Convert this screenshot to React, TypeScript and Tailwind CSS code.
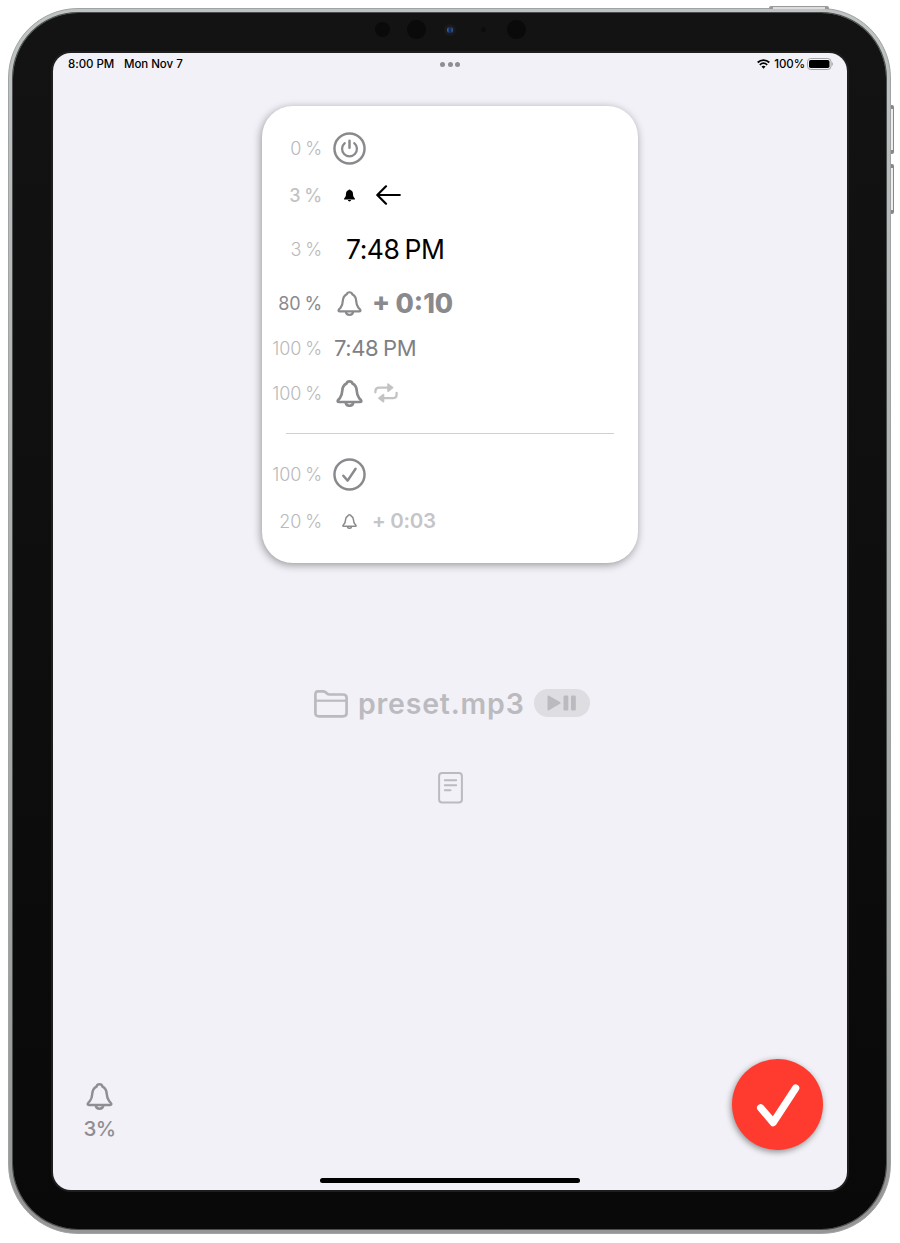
import type { ReactNode } from "react";

function Bell({ size, stroke = 2 }: { size: number; stroke?: number }) {
  return (
    <svg width={size} height={size} viewBox="0 0 28 28" fill="none" stroke="currentColor" strokeWidth={stroke} strokeLinejoin="round" className="block shrink-0">
      <path d="M14 1.4C12.4 1.4 11.3 2.3 10.9 3.7C8.2 5 6.7 7.6 6.5 11.2C6.3 15.2 5.8 16.6 4 18.7C2.5 20.4 1.7 21 1.7 21.9C1.7 22.5 2.1 22.8 2.8 22.8H25.2C25.9 22.8 26.3 22.5 26.3 21.9C26.3 21 25.5 20.4 24 18.7C22.2 16.6 21.7 15.2 21.5 11.2C21.3 7.6 19.8 5 17.1 3.7C16.7 2.3 15.6 1.4 14 1.4Z" />
      <path d="M10 23C10.2 25.4 11.8 26.7 14 26.7S17.8 25.4 18 23" />
    </svg>
  );
}

function BellSolid() {
  return (
    <svg width="13" height="13" viewBox="0 0 12 13" fill="currentColor" className="block">
      <path d="M6 .4C5.4 .4 5 .8 4.8 1.2C3.3 1.7 2.6 3 2.5 4.7C2.4 7 2.1 7.7 1.2 8.7C.7 9.3 .5 9.5 .5 9.9C.5 10.3 .8 10.5 1.2 10.5H10.8C11.2 10.5 11.5 10.3 11.5 9.9C11.5 9.5 11.3 9.3 10.8 8.7C9.9 7.7 9.6 7 9.5 4.7C9.4 3 8.7 1.7 7.2 1.2C7 .8 6.6 .4 6 .4Z" />
      <path d="M4.3 11.1H7.7C7.4 12 6.8 12.4 6 12.4S4.6 12 4.3 11.1Z" />
    </svg>
  );
}

function Power() {
  return (
    <svg width="33" height="33" viewBox="0 0 32 32" fill="none" stroke="currentColor" strokeWidth="2.4" strokeLinecap="round" className="block">
      <circle cx="16" cy="16" r="14.6" />
      <path d="M16 8.4V15.2" />
      <path d="M11.4 10.8A7.2 7.2 0 1 0 20.6 10.8" strokeWidth="2.2" />
    </svg>
  );
}

function CheckCircle() {
  return (
    <svg width="33" height="33" viewBox="0 0 32 32" fill="none" stroke="currentColor" strokeWidth="2.4" strokeLinecap="round" strokeLinejoin="round" className="block">
      <circle cx="16" cy="16" r="14.6" />
      <path d="M10 17.2L14.2 22L21.9 10.4" />
    </svg>
  );
}

function Repeat() {
  return (
    <svg width="24" height="20" viewBox="0 0 24 20" fill="none" stroke="currentColor" strokeWidth="2.3" strokeLinecap="round" strokeLinejoin="round" className="block">
      <path d="M1.4 9.3V8.5C1.4 6 2.8 4.7 5.2 4.7H14.5" />
      <path d="M22.6 10V11.2C22.6 13.8 21.2 15.2 18.8 15.2H9" />
      <path d="M14 1.1V8.3L18.6 4.7Z" fill="currentColor" strokeWidth="1.6" />
      <path d="M9.5 11.6V18.8L4.9 15.2Z" fill="currentColor" strokeWidth="1.6" />
    </svg>
  );
}

function Row({ height, level, levelClass = "font-light text-[#b9b9bb]", children }: { height: string; level: string; levelClass?: string; children: ReactNode }) {
  return (
    <div className={"flex items-center " + height}>
      <span className={"w-[60px] shrink-0 pt-[2px] text-right text-[18px] leading-6 tracking-[-0.1px] whitespace-nowrap [word-spacing:-1px] " + levelClass}>{level}</span>
      {children}
    </div>
  );
}

function IconCell({ children }: { children: ReactNode }) {
  return <div className="flex w-[55px] shrink-0 justify-center text-[#8a8a8e]">{children}</div>;
}

function StatusBar() {
  return (
    <div className="flex h-[22px] items-center pr-[14px] pl-[15px] text-[11.5px] font-medium text-black">
      <div className="flex w-[300px] gap-[9px] pt-[2px] whitespace-nowrap">
        <span className="w-[47px] tracking-[-0.05px]">8:00 PM</span>
        <span className="tracking-[-0.05px]">Mon Nov 7</span>
      </div>
      <div className="flex flex-1 justify-center gap-[2.7px]">
        <i className="size-[5px] rounded-full bg-[#8e8e93]" />
        <i className="size-[5px] rounded-full bg-[#8e8e93]" />
        <i className="size-[5px] rounded-full bg-[#8e8e93]" />
      </div>
      <div className="flex w-[301px] items-center justify-end">
        <svg width="13" height="10" viewBox="0 0 13 10" fill="none" stroke="black" strokeWidth="1.8" className="mr-[4px]">
          <path d="M.7 3.5C4 .2 9 .2 12.3 3.5" />
          <path d="M2.8 5.8C5 3.8 8 3.8 10.2 5.8" />
          <path d="M4.5 7.6C5.7 6.6 7.3 6.6 8.5 7.6L6.5 9.7Z" fill="black" stroke="none" />
        </svg>
        <span className="pt-[2px] tracking-[-0.05px]">100%</span>
        <svg width="26" height="12" viewBox="0 0 26 12" className="ml-[2px]">
          <rect x=".5" y=".5" width="23.5" height="11" rx="3.2" fill="none" stroke="#a3a3a7" />
          <rect x="2" y="2" width="20.5" height="8" rx="1.8" fill="black" />
          <path d="M24.7 4V8C26.2 7.4 26.2 4.6 24.7 4Z" fill="#a3a3a7" />
        </svg>
      </div>
    </div>
  );
}

function TimerCard() {
  return (
    <section className="mx-auto mt-[31px] h-[457px] w-[376px] rounded-[31px] bg-white pt-[19px] shadow-[-1px_2px_8px_rgba(0,0,0,0.38)]">
      <Row height="h-[46px]" level="0 %"><IconCell><Power /></IconCell></Row>
      <Row height="h-[48px]" level="3 %" levelClass="font-medium text-[#c3c3c5]">
        <IconCell><span className="text-black"><BellSolid /></span></IconCell>
        <svg width="25" height="20" viewBox="0 0 25 20" fill="none" stroke="black" strokeWidth="2.2" strokeLinecap="round" strokeLinejoin="round" className="-ml-[1px]">
          <path d="M23.8 10H1.5M10 1.3L1.3 10L10 18.7" />
        </svg>
      </Row>
      <Row height="h-[60px]" level="3 %">
        <span className="pt-[2px] pl-[24px] text-[26.5px] tracking-[-0.45px] whitespace-nowrap text-black [word-spacing:-2px]">7:48 PM</span>
      </Row>
      <Row height="h-[48px]" level="80 %" levelClass="font-normal text-[#8a8a8e]">
        <IconCell><Bell size={25} stroke={2.5} /></IconCell>
        <span className="-ml-[5px] pt-px text-[26.5px] font-extrabold whitespace-nowrap text-[#8a8a8e] [word-spacing:-0.5px]">+ 0:10</span>
      </Row>
      <Row height="h-[42px]" level="100 %">
        <span className="pt-px pl-[12px] text-[22px] font-normal tracking-[-0.4px] whitespace-nowrap text-[#808084] [word-spacing:-1px]">7:48 PM</span>
      </Row>
      <Row height="h-[48px]" level="100 %">
        <IconCell><Bell size={27} stroke={2.8} /></IconCell>
        <span className="-ml-[3px] text-[#c3c3c5]"><Repeat /></span>
      </Row>
      <div className="mt-[16px] ml-[24px] h-px w-[328px] bg-[#d0d0d2]" />
      <div className="mt-[16px]">
        <Row height="h-[48px]" level="100 %"><IconCell><CheckCircle /></IconCell></Row>
        <Row height="h-[46px]" level="20 %">
          <IconCell><Bell size={15} stroke={2.8} /></IconCell>
          <span className="-ml-[5px] pt-px text-[20.5px] font-semibold tracking-[-0.3px] whitespace-nowrap text-[#c5c5c7]">+ 0:03</span>
        </Row>
      </div>
    </section>
  );
}

function SoundPicker() {
  return (
    <div className="mt-[124px] ml-[261px] flex h-[34px] items-center text-[#bbbbbf]">
      <svg width="34" height="28" viewBox="0 0 34 28" fill="none" stroke="currentColor" strokeWidth="2.7" strokeLinejoin="round">
        <path d="M1.4 23V4.4C1.4 2.3 2.5 1.3 4.4 1.3H8.8C10.2 1.3 11 1.7 12 2.6L13 3.5C13.7 4.2 14.4 4.5 15.5 4.5H29C31.4 4.5 32.6 5.6 32.6 7.8V23C32.6 25.4 31.4 26.3 29 26.3H5C2.6 26.3 1.4 25.4 1.4 23Z" />
        <path d="M1.4 10.7H32.6" strokeWidth="2.2" />
      </svg>
      <span className="ml-[10px] w-[176px] text-[28.5px] leading-[34px] font-semibold tracking-[0.8px] whitespace-nowrap">preset.mp3</span>
      <div className="-mt-[2px] flex h-[28px] w-[56px] items-center justify-center rounded-full bg-[#dddde2]">
        <svg width="30" height="16" viewBox="0 0 30 16" fill="currentColor">
          <path d="M.5 1.5C.5 .6 1.2 .3 2 .7L13 7C13.8 7.5 13.8 8.3 13 8.8L2 15.2C1.2 15.7 .5 15.3 .5 14.4Z" />
          <rect x="16.5" y=".5" width="4.8" height="15" rx="1.2" />
          <rect x="24" y=".5" width="4.8" height="15" rx="1.2" />
        </svg>
      </div>
    </div>
  );
}

export default function App() {
  return (
    <div className="relative h-[1243px] w-[900px] overflow-hidden bg-white p-[8px] font-['Inter',sans-serif]">
      <div className="absolute top-[6px] left-[769px] h-[3px] w-[60px] rounded-t-[2px] border-x-4 border-t border-[#999] bg-[#ddd]" />
      <div className="absolute top-[105px] left-[891px] h-[49px] w-[3px] rounded-r-[2px] border-y-4 border-r border-[#888] bg-[#eee]" />
      <div className="absolute top-[164px] left-[891px] h-[50px] w-[3px] rounded-r-[2px] border-y-4 border-r border-[#888] bg-[#eee]" />
      <div className="h-[1226px] w-[883px] rounded-[70px] border border-[#a0a3a3] bg-linear-to-b from-[#c0c3c3] to-[#969696] p-[4px]">
        <div className="relative h-[1216px] w-[873px] rounded-[65px] bg-linear-to-b from-[#131313] to-[#090909] pt-[40px] pl-[40px] shadow-[0_0_0_1px_#4b4e4e]">
          <i className="absolute top-[9px] left-[362px] size-[15px] rounded-full bg-[#0a0a0a]" />
          <i className="absolute top-[7px] left-[394px] size-[19px] rounded-full bg-[#0a0a0a]" />
          <i className="absolute top-[11px] left-[431px] flex size-[12px] items-center justify-center rounded-full bg-[#1a1a1c]">
            <i className="size-[6px] rounded-full bg-linear-to-r from-[#2879a8] via-[#171b55] to-[#3268a5]" />
          </i>
          <i className="absolute top-[14px] left-[468px] size-[5px] rounded-full bg-[#0d0d0d]" />
          <i className="absolute top-[7px] left-[494px] size-[19px] rounded-full bg-[#0a0a0a]" />
          <main className="flex h-[1137px] w-[794px] flex-col rounded-[18px] bg-[#f2f1f7] shadow-[0_0_0_2px_#1e1e1f]">
            <StatusBar />
            <TimerCard />
            <SoundPicker />
            <div className="mt-[51px] flex justify-center text-[#bbbbbf]">
              <svg width="25" height="32" viewBox="0 0 25 32" fill="none" stroke="currentColor" strokeWidth="2" strokeLinecap="round">
                <rect x="1.1" y="1.1" width="22.8" height="29.4" rx="3" />
                <path d="M6.8 8.2H18.2M6.8 13.2H18.2M6.8 18.2H12.5" />
              </svg>
            </div>
            <div className="mt-auto flex items-center justify-between pr-[24px] pl-[30px]">
              <div className="flex w-[33px] flex-col items-center pt-[16px] text-[#8e8e93]">
                <Bell size={27} stroke={2.6} />
                <span className="mt-[5px] text-[20.5px] leading-7 font-medium tracking-[-0.5px]">3%</span>
              </div>
              <div className="flex size-[91px] items-center justify-center rounded-full bg-[#ff3b30] shadow-[-1px_2px_6px_rgba(0,0,0,0.42)]">
                <svg width="44" height="44" viewBox="0 0 44 44" fill="none" stroke="white" strokeWidth="7.4" strokeLinecap="round" strokeLinejoin="round">
                  <path d="M4.7 24.8L17.2 39.5L39.6 5.2" />
                </svg>
              </div>
            </div>
            <div className="mx-auto mt-[28px] mb-[7px] h-[5px] w-[260px] shrink-0 rounded-full bg-black" />
          </main>
        </div>
      </div>
    </div>
  );
}
